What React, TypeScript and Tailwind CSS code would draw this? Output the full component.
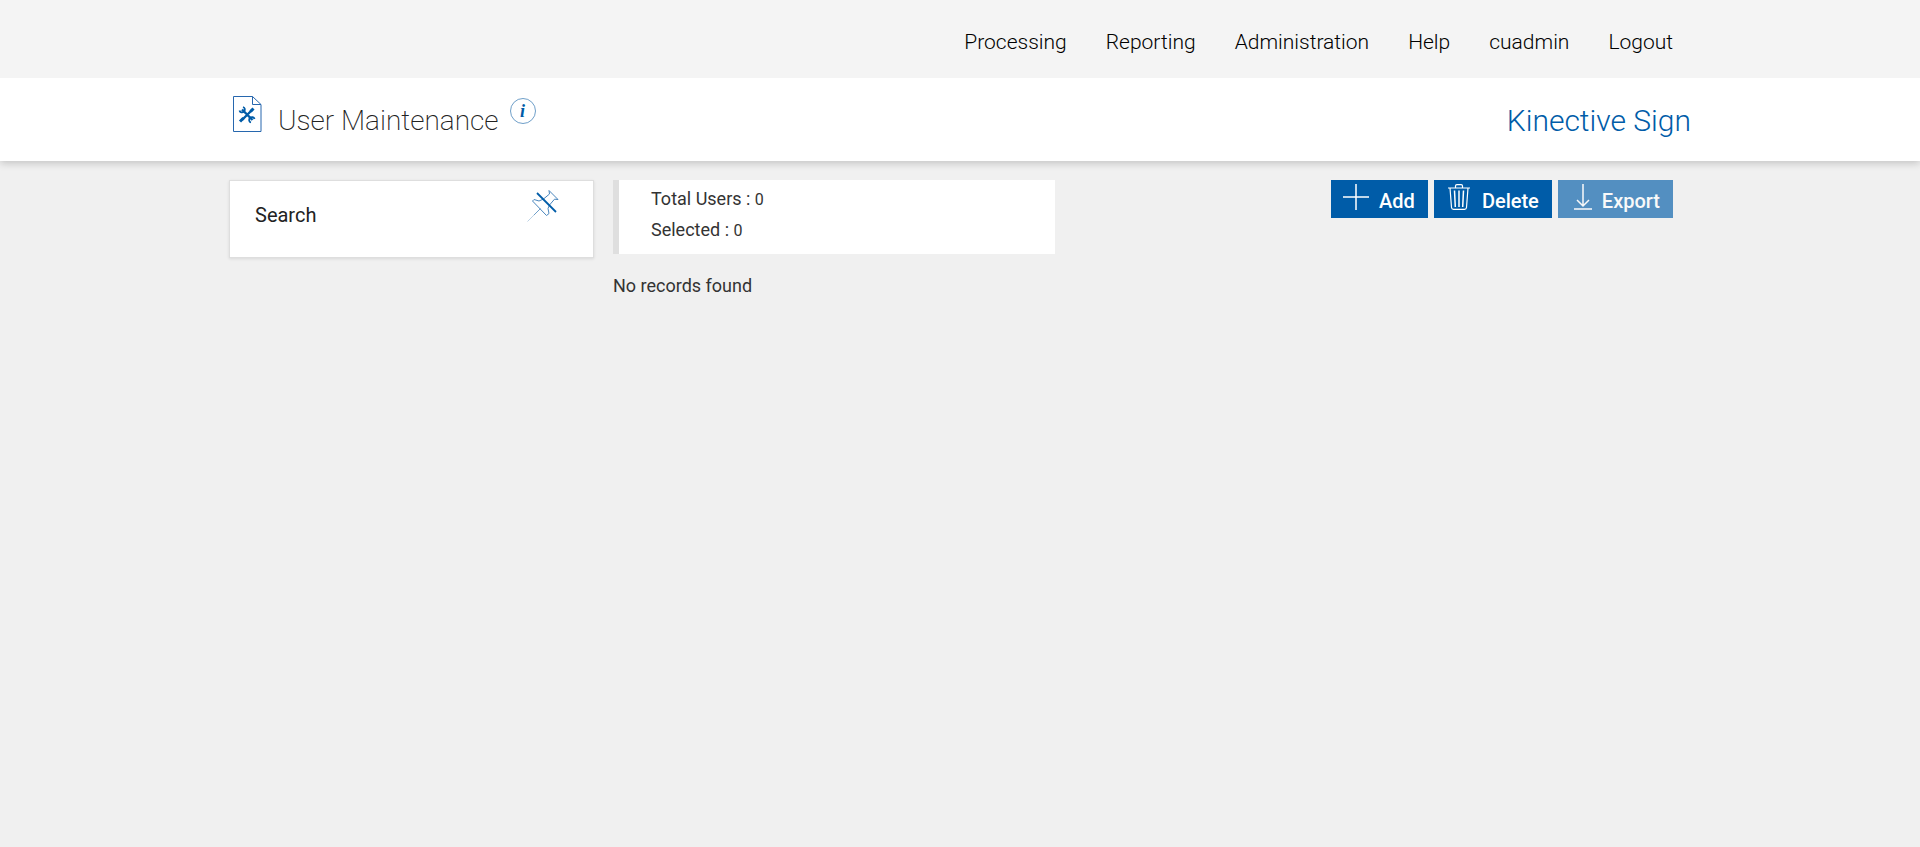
const navItems = ['Processing', 'Reporting', 'Administration', 'Help', 'cuadmin', 'Logout'];

const PageIcon = () => (
  <svg width="30" height="38" viewBox="0 0 30 38" fill="none" stroke="#2767ae" aria-hidden="true">
    <path d="M.5 1.5h19l8.500 8v27H.5z" />
    <path d="M19.500 1.500v8h8.500" />
    <path d="M9 14.500l10.500 10.500M19.500 14.500L9 25" stroke="#005ca8" strokeWidth="2.400" />
    <path d="M6.500 15.500c.5 2 3 2.500 4.500 1s1-4-1-4.500M21.500 24c-.5-2-3-2.500-4.500-1s-1 4 1 4.500" stroke="#005ca8" strokeWidth="1.800" />
    <path d="M17.500 16.500l3-3M7 26.500l3.500-3.500" stroke="#005ca8" strokeWidth="3" />
  </svg>
);

const PinOffIcon = () => (
  <svg width="34" height="34" viewBox="0 0 34 34" fill="none" stroke="#4a86bd" aria-hidden="true">
    <path d="M23 1.500l9 9-3.500-.3-5 5.800-1.500 3.500 1 5-2.500 2L6.500 12l1.500-1.500 5 1.500 4.500-2 6-5z" />
    <path d="M14.500 19.500L8 26" stroke="#6f9fc9" />
    <path d="M8 26l-6.500 6.500" stroke="#bcd2e5" />
    <path d="M11 4l19 19" stroke="#005ca8" strokeWidth="1.800" />
  </svg>
);

const PlusIcon = () => (
  <svg width="26" height="26" viewBox="0 0 26 26" fill="none" stroke="currentColor" strokeWidth="1.500" aria-hidden="true">
    <path d="M13 0v26M0 13h26" />
  </svg>
);

const TrashIcon = () => (
  <svg width="22" height="26" viewBox="0 0 22 26" fill="none" stroke="currentColor" strokeWidth="1.200" aria-hidden="true">
    <path d="M0 4h22M7.500 4V2q0-1.400 1.400-1.400h4.200q1.400 0 1.400 1.400v2M2 4l1.500 19.500q.2 1.900 2 1.900h11q1.800 0 2-1.900L20 4" />
    <path d="M6.500 6.500l.8 16.500M11 6.500V23M15.500 6.500L14.700 23" strokeWidth="1.500" />
  </svg>
);

const DownloadIcon = () => (
  <svg width="18" height="26" viewBox="0 0 18 26" fill="none" stroke="currentColor" strokeWidth="1.500" aria-hidden="true">
    <path d="M9 0v22M3 16l6 6 6-6M0 25h18" />
  </svg>
);

const buttonClass = 'flex h-[38px] items-start pt-1 pr-[13px] text-xl leading-[34px] font-medium text-white bg-[#005ca8]';

const App = () => {
  return (
    <div className="min-h-screen bg-[#f0f0f0] font-['Roboto',sans-serif] text-[#333]">
      <nav className="relative z-10 bg-[#f4f4f4]">
        <ul className="mx-auto flex h-[78px] max-w-[1462px] items-center justify-end gap-[39px] pr-[18px] pt-[7px] text-[21px] font-light text-black">
          {navItems.map((item) => (
            <li key={item}>
              <a href="#">{item}</a>
            </li>
          ))}
        </ul>
      </nav>

      <header className="relative bg-white shadow-[0_2px_8px_rgba(0,0,0,0.2)]">
        <div className="mx-auto flex h-[83px] max-w-[1462px] items-start justify-between pl-1">
          <div className="flex items-start pt-[17px]">
            <PageIcon />
            <h1 className="ml-[15px] pt-[6px] text-[28px] leading-10 font-extralight text-[#222]">User Maintenance</h1>
            <button
              type="button"
              aria-label="Page information"
              className="ml-[11px] mt-[3px] flex size-[26px] items-center justify-center rounded-full border border-[#6f9fc9] font-['Liberation_Serif',serif] text-lg leading-none font-bold text-[#005ca8] italic"
            >
              i
            </button>
          </div>
          <span className="pt-[23px] text-3xl leading-10 font-light text-[#005ca8]">Kinective Sign</span>
        </div>
      </header>

      <main className="mx-auto flex max-w-[1462px] items-start gap-[19px] pt-[19px]">
        <section className="flex h-[78px] w-[365px] justify-between border border-[#dedede] bg-white pl-[25px] pr-[33px] shadow-[0_1px_3px_rgba(0,0,0,0.1)]">
          <h2 className="pt-5 text-xl leading-7 font-normal text-[#222]">Search</h2>
          <button type="button" aria-label="Unpin search" className="mt-2 self-start">
            <PinOffIcon />
          </button>
        </section>

        <section className="flex-1 pr-[18px]">
          <div className="flex items-start justify-between">
            <div className="h-[74px] w-[442px] border-l-[6px] border-[#dfdfdf] bg-white pl-8 pt-[3px] text-lg">
              <p className="leading-[31px]">
                Total Users : <span className="text-base">0</span>
              </p>
              <p className="leading-[31px]">
                Selected : <span className="text-base">0</span>
              </p>
            </div>
            <div className="flex gap-[6px]">
              <button type="button" className={`${buttonClass} gap-[10px] pl-3`}>
                <PlusIcon />
                <span>Add</span>
              </button>
              <button type="button" className={`${buttonClass} gap-3 pl-[14px]`}>
                <TrashIcon />
                <span>Delete</span>
              </button>
              <button type="button" disabled className={`${buttonClass} gap-[10px] pl-4 opacity-65`}>
                <DownloadIcon />
                <span>Export</span>
              </button>
            </div>
          </div>
          <p className="mt-[18px] text-lg leading-7">No records found</p>
        </section>
      </main>
    </div>
  );
};

export default App;
